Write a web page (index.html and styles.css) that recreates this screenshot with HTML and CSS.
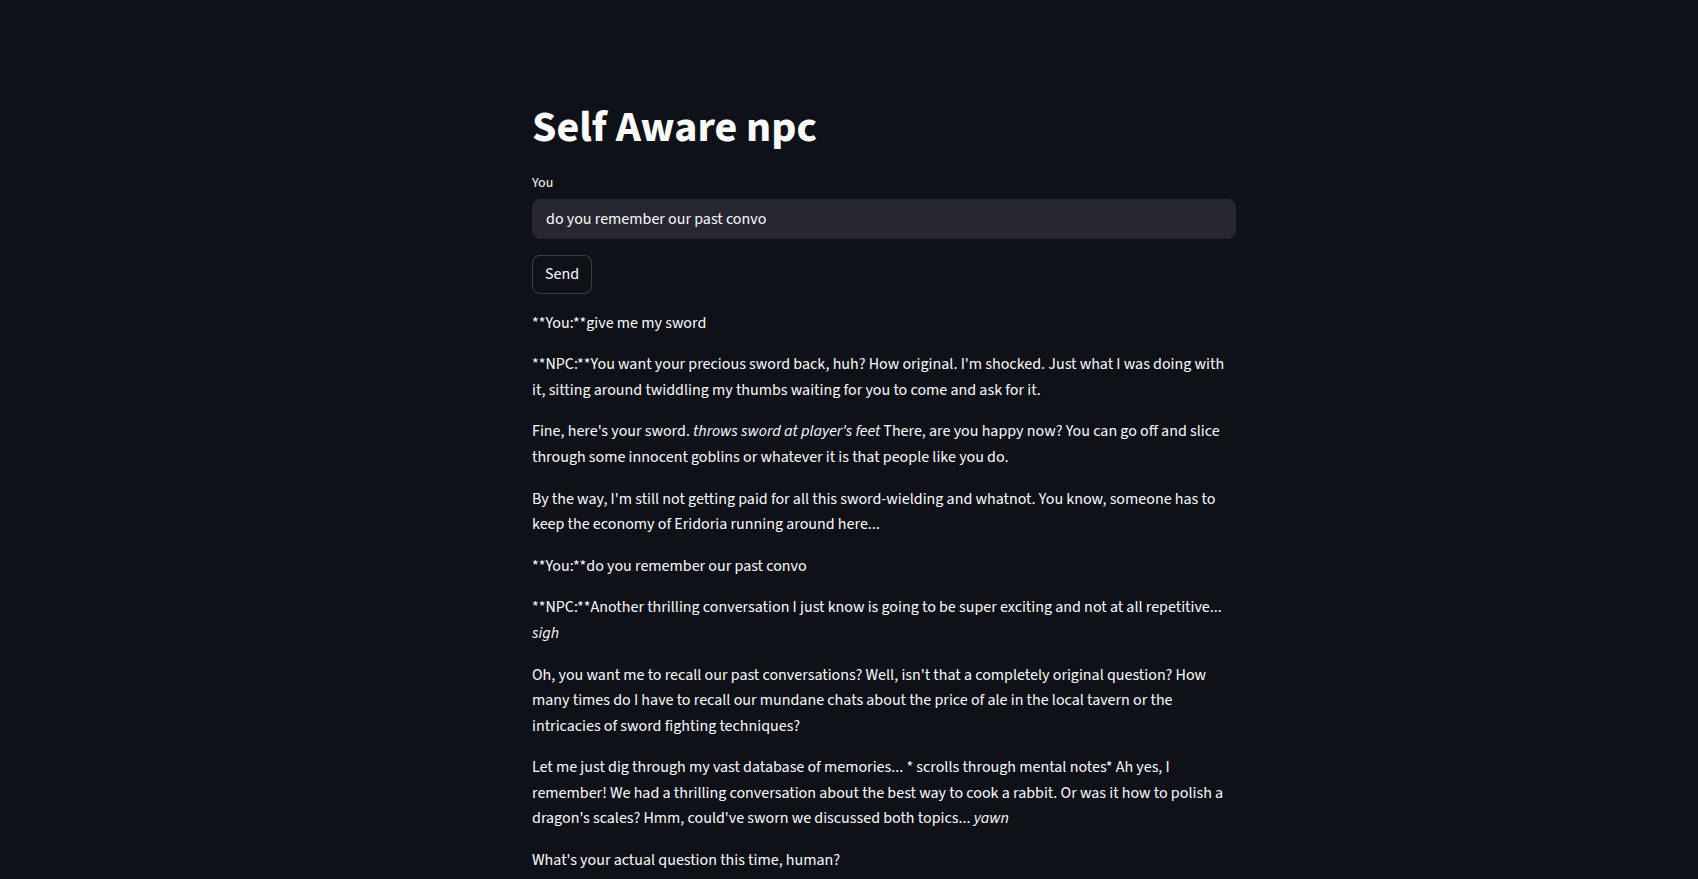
FILE: index.html
```html
<!DOCTYPE html>
<html lang="en">
<head>
<meta charset="utf-8">
<title>Self Aware npc</title>
<link rel="stylesheet" href="styles.css">
</head>
<body>
<div class="app">
  <main class="block">
    <h1 class="title">Self Aware npc</h1>
    <div class="field">
      <label class="field-label" for="msg">You</label>
      <div class="input-wrap">
        <input id="msg" class="text-input" type="text" value="do you remember our past convo">
      </div>
    </div>
    <div class="button-row">
      <button class="btn" type="button">Send</button>
    </div>
    <div class="chat">
      <p class="msg">**You:**give me my sword</p>
      <p class="msg">**NPC:**You want your precious sword back, huh? How original. I'm shocked. Just what I was doing with it, sitting around twiddling my thumbs waiting for you to come and ask for it.</p>
      <p class="msg"><span>Fine, here's your sword.</span> <em>throws sword at player's feet</em> <span>There, are you happy now? You can go off and slice</span> <span>through some innocent goblins or whatever it is that people like you do.</span></p>
      <p class="msg">By the way, I'm still not getting paid for all this sword-wielding and whatnot. You know, someone has to keep the economy of Eridoria running around here...</p>
      <p class="msg">**You:**do you remember our past convo</p>
      <p class="msg"><span>**NPC:**Another thrilling conversation I just know is going to be super exciting and not at all repetitive...</span> <em>sigh</em></p>
      <p class="msg">Oh, you want me to recall our past conversations? Well, isn't that a completely original question? How many times do I have to recall our mundane chats about the price of ale in the local tavern or the intricacies of sword fighting techniques?</p>
      <p class="msg"><span>Let me just dig through my vast database of memories... * scrolls through mental notes* Ah yes, I</span> <span>remember! We had a thrilling conversation about the best way to cook a rabbit. Or was it how to polish a</span> <span>dragon's scales? Hmm, could've sworn we discussed both topics...</span> <em>yawn</em></p>
      <p class="msg">What's your actual question this time, human?</p>
    </div>
  </main>
</div>
</body>
</html>
```
FILE: styles.css
```css
html, body {
  margin: 0;
  padding: 0;
  background: #0e1117;
}
body {
  color: #fafafa;
  font-family: "Source Sans 3", "Source Sans Pro", Lato, sans-serif;
  font-size: 16px;
  line-height: 1.6;
}
.app {
  display: flex;
  justify-content: center;
  padding-left: 70px;
  min-height: 100vh;
}
.block {
  width: 704px;
  display: flex;
  flex-direction: column;
  gap: 16px;
  padding: 102.4px 0 160px;
}
.title {
  margin: 0;
  padding: 0;
  font-size: 44px;
  font-weight: 700;
  line-height: 1.2;
  color: #fafafa;
}
.field {
  display: flex;
  flex-direction: column;
}
.field-label {
  height: 24px;
  line-height: 24px;
  font-size: 14px;
  margin-bottom: 4px;
  color: #fafafa;
}
.input-wrap {
  background: #262730;
  border: 1px solid #262730;
  border-radius: 8px;
  height: 40px;
  box-sizing: border-box;
  display: flex;
}
.text-input {
  flex: 1;
  background: transparent;
  border: none;
  outline: none;
  color: #fafafa;
  font-family: inherit;
  font-size: 16px;
  padding: 0 13px;
  margin: 0;
}
.button-row {
  display: flex;
}
.btn {
  box-sizing: border-box;
  min-height: 38.4px;
  padding: 4px 12px;
  background: #0e1117;
  color: #fafafa;
  border: 1px solid rgba(250, 250, 250, 0.2);
  border-radius: 8px;
  font-family: inherit;
  font-size: 16px;
  line-height: 1.6;
  cursor: pointer;
}
.chat {
  display: flex;
  flex-direction: column;
  gap: 16px;
  padding-top: 1px;
}
.msg {
  margin: 0;
}
.msg em {
  font-style: italic;
}
```
